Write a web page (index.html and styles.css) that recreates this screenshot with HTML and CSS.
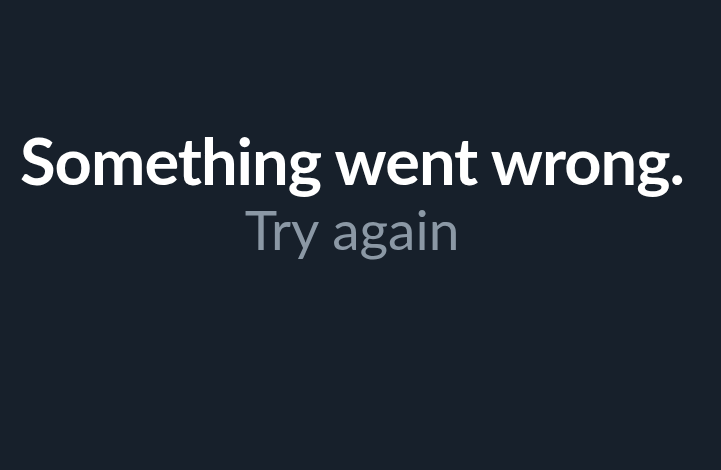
FILE: index.html
```html
<!DOCTYPE html>
<html>
<head>
<meta charset="utf-8">
<link rel="stylesheet" href="styles.css">
</head>
<body>
<main class="error">
  <h1 class="title">Something went wrong.</h1>
  <p class="retry">Try again</p>
</main>
</body>
</html>
```
FILE: styles.css
```css
html, body {
  margin: 0;
  height: 100%;
  background: #17202b;
}
.error {
  height: 470px;
  box-sizing: border-box;
  padding: 120px 17px 0 0;
  display: flex;
  flex-direction: column;
  align-items: center;
  font-family: Lato, "Noto Sans", sans-serif;
}
.title {
  margin: 0;
  color: #ffffff;
  font-weight: 700;
  font-size: 65px;
  line-height: 80px;
  letter-spacing: -1px;
  white-space: nowrap;
}
.retry {
  margin: 0;
  color: #8b98a5;
  font-weight: 400;
  font-size: 55px;
  line-height: 58px;
}
```
